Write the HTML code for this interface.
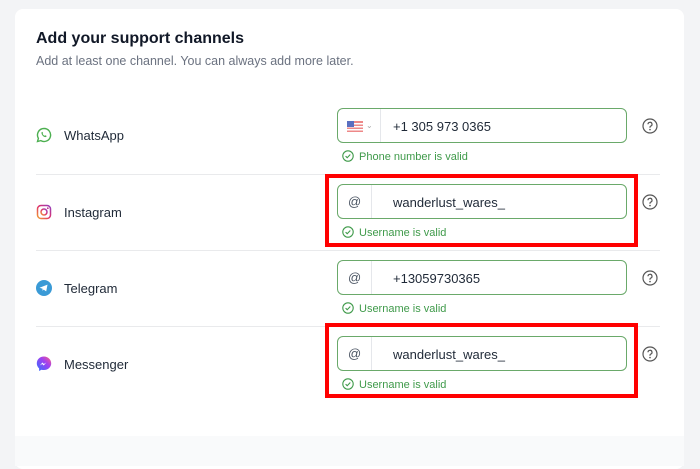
<!DOCTYPE html>
<html><head><style>
*{box-sizing:border-box;margin:0;padding:0}
body{width:700px;height:453px;background:#f3f4f6;font-family:"Liberation Sans",sans-serif;position:relative;overflow:hidden}
.card{position:absolute;left:15px;top:9px;width:669px;height:460px;background:#fff;border-radius:8px}
.foot{position:absolute;left:15px;top:436px;width:669px;height:30px;background:#f9fafb}
h1{position:absolute;left:36px;top:30px;font-size:16px;font-weight:bold;color:#111827}
.sub{position:absolute;left:36px;top:54px;font-size:12.5px;color:#6b7280}
.div{position:absolute;left:36px;width:624px;height:1px;background:#e9eaec}
.lab{position:absolute;left:64px;font-size:13px;color:#1f2937}
.ic{position:absolute;left:36px;width:16px;height:16px}
.inp{position:absolute;left:337px;width:290px;height:35px;border:1px solid #6aa96a;border-radius:6px}
.pre{position:absolute;left:0;top:0;height:33px;border-right:1px solid #e5e7eb;font-size:13px;color:#4b5563;line-height:33px}
.val{position:absolute;left:393px;top:0;line-height:35px;font-size:13px;color:#1f2937}
.ok{position:absolute;left:342px;font-size:11px;color:#3f9a4a;line-height:12px}
.ok svg{vertical-align:-2px;margin-right:5px}
.q{position:absolute;left:642px;width:16px;height:16px}
.red{position:absolute;left:325px;width:313px;border:4px solid #f00}
</style></head><body>
<div class="card"></div><div class="foot"></div>
<h1>Add your support channels</h1>
<div class="sub">Add at least one channel. You can always add more later.</div>
<div class="div" style="top:174px"></div><div class="div" style="top:250px"></div><div class="div" style="top:326px"></div>

<svg class="ic" style="top:127px" viewBox="0 0 16 16"><path d="M8 1.5a6.5 6.5 0 0 0-5.6 9.8L1.5 14.5l3.3-.9A6.5 6.5 0 1 0 8 1.5z" fill="none" stroke="#4caf50" stroke-width="1.4"/><path d="M5.8 5c.3-.3.7-.2.8.1l.5 1.1-.5.6c.4.9 1.1 1.6 2 2l.6-.5 1.1.5c.3.1.4.5.1.8-.8.8-2.2.6-3.4-.6S5 5.8 5.8 5z" fill="#4caf50"/></svg>
<div class="lab" style="top:128px">WhatsApp</div>
<svg class="ic" style="top:204px" viewBox="0 0 16 16"><defs><linearGradient id="g" x1="0" y1="1" x2="1" y2="0"><stop offset="0" stop-color="#f0a030"/><stop offset=".5" stop-color="#e0306a"/><stop offset="1" stop-color="#9040c0"/></linearGradient></defs><rect x="1.5" y="1.5" width="13" height="13" rx="3.5" fill="none" stroke="url(#g)" stroke-width="1.5"/><circle cx="8" cy="8" r="3" fill="none" stroke="url(#g)" stroke-width="1.5"/><circle cx="11.8" cy="4.2" r=".9" fill="#c03090"/></svg>
<div class="lab" style="top:205px">Instagram</div>
<svg class="ic" style="top:280px" viewBox="0 0 16 16"><circle cx="8" cy="8" r="8" fill="#3a9ad6"/><path d="M3.5 7.8l8-3.2-1.3 6.8-2.5-1.8-1.3 1.2.2-2z" fill="#fff"/></svg>
<div class="lab" style="top:281px">Telegram</div>
<svg class="ic" style="top:356px" viewBox="0 0 16 16"><defs><linearGradient id="m" x1="0" y1="1" x2="1" y2="0"><stop offset="0" stop-color="#3070ff"/><stop offset=".6" stop-color="#a040f0"/><stop offset="1" stop-color="#ff6080"/></linearGradient></defs><path d="M8 .5C3.8.5.8 3.5.8 7.4c0 2 .9 3.8 2.3 5v2.6l2.3-1.3c.8.2 1.6.3 2.6.3 4.2 0 7.2-3 7.2-6.6S12.2.5 8 .5z" fill="url(#m)"/><path d="M3.8 9.5l2.6-3 1.5 1.5 2.4-1.5-2.6 3-1.5-1.5z" fill="#fff"/></svg>
<div class="lab" style="top:357px">Messenger</div>

<div class="inp" style="top:108px"><div class="pre" style="width:43px"><svg style="position:absolute;left:9px;top:12px" width="16" height="11" viewBox="0 0 16 11"><rect width="16" height="11" fill="#e88"/><rect y="2" width="16" height="1.5" fill="#fff"/><rect y="5" width="16" height="1.5" fill="#fff"/><rect y="8" width="16" height="1.5" fill="#fff"/><rect width="7" height="6" fill="#5a6fc0"/></svg><span style="position:absolute;left:28px;top:0;font-size:8px;color:#aaa">⌄</span></div><div class="val" style="left:55px">+1 305 973 0365</div></div>
<div class="ok" style="top:150px"><svg width="12" height="12" viewBox="0 0 12 12"><circle cx="6" cy="6" r="5.2" fill="none" stroke="#3f9a4a" stroke-width="1.1"/><path d="M3.6 6.1l1.6 1.6 3.1-3.2" fill="none" stroke="#3f9a4a" stroke-width="1.1"/></svg>Phone number is valid</div>

<div class="inp" style="top:184px"><div class="pre" style="width:34px;padding-left:10px">@</div><div class="val" style="left:55px">wanderlust_wares_</div></div>
<div class="ok" style="top:226px"><svg width="12" height="12" viewBox="0 0 12 12"><circle cx="6" cy="6" r="5.2" fill="none" stroke="#3f9a4a" stroke-width="1.1"/><path d="M3.6 6.1l1.6 1.6 3.1-3.2" fill="none" stroke="#3f9a4a" stroke-width="1.1"/></svg>Username is valid</div>

<div class="inp" style="top:260px"><div class="pre" style="width:34px;padding-left:10px">@</div><div class="val" style="left:55px">+13059730365</div></div>
<div class="ok" style="top:302px"><svg width="12" height="12" viewBox="0 0 12 12"><circle cx="6" cy="6" r="5.2" fill="none" stroke="#3f9a4a" stroke-width="1.1"/><path d="M3.6 6.1l1.6 1.6 3.1-3.2" fill="none" stroke="#3f9a4a" stroke-width="1.1"/></svg>Username is valid</div>

<div class="inp" style="top:336px"><div class="pre" style="width:34px;padding-left:10px">@</div><div class="val" style="left:55px">wanderlust_wares_</div></div>
<div class="ok" style="top:378px"><svg width="12" height="12" viewBox="0 0 12 12"><circle cx="6" cy="6" r="5.2" fill="none" stroke="#3f9a4a" stroke-width="1.1"/><path d="M3.6 6.1l1.6 1.6 3.1-3.2" fill="none" stroke="#3f9a4a" stroke-width="1.1"/></svg>Username is valid</div>

<svg class="q" style="top:118px" viewBox="0 0 16 16"><circle cx="8" cy="8" r="7" fill="none" stroke="#555" stroke-width="1.2"/><path d="M6 6.3a2 2 0 1 1 2.6 1.9c-.4.2-.6.5-.6 1v.6" fill="none" stroke="#555" stroke-width="1.2"/><circle cx="8" cy="11.6" r=".8" fill="#555"/></svg>
<svg class="q" style="top:194px" viewBox="0 0 16 16"><circle cx="8" cy="8" r="7" fill="none" stroke="#555" stroke-width="1.2"/><path d="M6 6.3a2 2 0 1 1 2.6 1.9c-.4.2-.6.5-.6 1v.6" fill="none" stroke="#555" stroke-width="1.2"/><circle cx="8" cy="11.6" r=".8" fill="#555"/></svg>
<svg class="q" style="top:270px" viewBox="0 0 16 16"><circle cx="8" cy="8" r="7" fill="none" stroke="#555" stroke-width="1.2"/><path d="M6 6.3a2 2 0 1 1 2.6 1.9c-.4.2-.6.5-.6 1v.6" fill="none" stroke="#555" stroke-width="1.2"/><circle cx="8" cy="11.6" r=".8" fill="#555"/></svg>
<svg class="q" style="top:346px" viewBox="0 0 16 16"><circle cx="8" cy="8" r="7" fill="none" stroke="#555" stroke-width="1.2"/><path d="M6 6.3a2 2 0 1 1 2.6 1.9c-.4.2-.6.5-.6 1v.6" fill="none" stroke="#555" stroke-width="1.2"/><circle cx="8" cy="11.6" r=".8" fill="#555"/></svg>

<div class="red" style="top:174px;height:73px"></div>
<div class="red" style="top:323px;height:75px"></div>
</body></html>
